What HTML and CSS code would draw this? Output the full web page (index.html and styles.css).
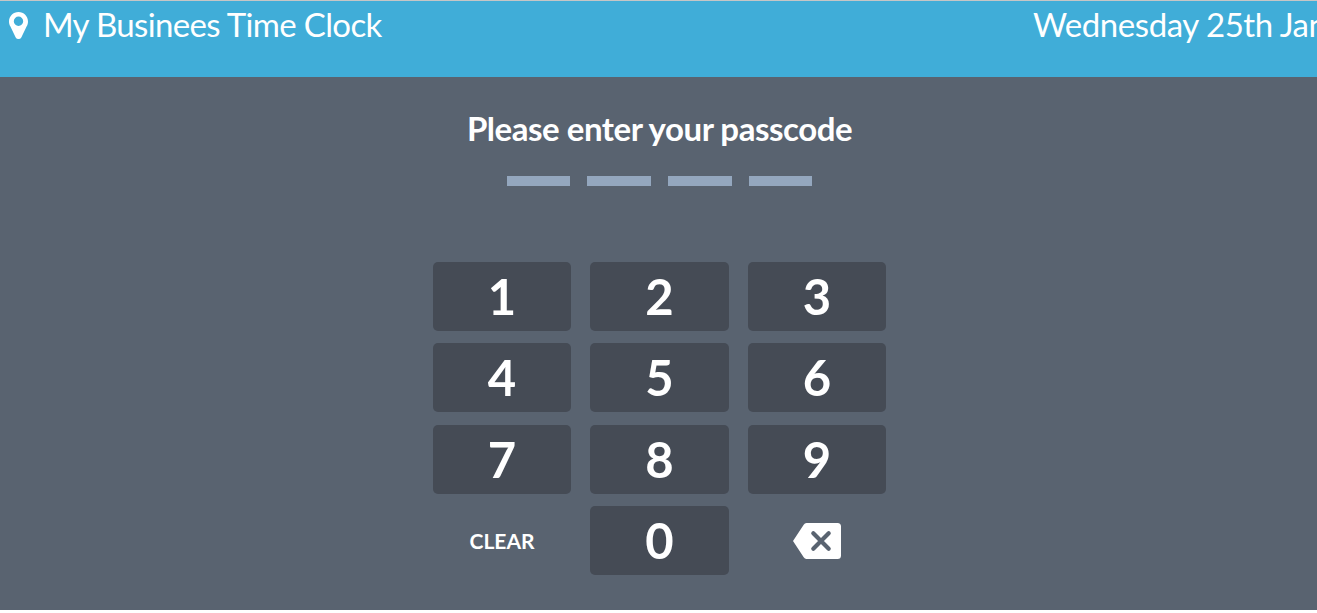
FILE: index.html
```html
<!DOCTYPE html>
<html lang="en">
<head>
<meta charset="utf-8">
<title>My Businees Time Clock</title>
<link rel="stylesheet" href="styles.css">
</head>
<body>
<header class="topbar">
  <svg class="pin" viewBox="0 0 19 27" aria-hidden="true"><path fill="#fff" fill-rule="evenodd" d="M9.500 0C4.200 0 0 4.200 0 9.400C0 11.500 .6 13 1.300 14.300L6.700 25.400Q7.500 27 9.500 27T12.300 25.400L17.700 14.300C18.400 13 19 11.500 19 9.400C19 4.200 14.800 0 9.500 0ZM9.500 4.500A4.700 4.700 0 1 1 9.500 13.900A4.700 4.700 0 1 1 9.500 4.500Z"/></svg>
  <span class="business">My Businees Time Clock</span>
  <span class="date">Wednesday 25th Jan</span>
</header>
<main class="clock">
  <h1 class="prompt">Please enter your passcode</h1>
  <div class="slots"><i class="slot"></i><i class="slot"></i><i class="slot"></i><i class="slot"></i></div>
  <div class="keypad">
    <button class="key">1</button><button class="key">2</button><button class="key">3</button>
    <button class="key">4</button><button class="key">5</button><button class="key">6</button>
    <button class="key">7</button><button class="key">8</button><button class="key">9</button>
    <button class="key clear">CLEAR</button><button class="key">0</button>
    <button class="key erase" aria-label="Delete"><svg class="erase-icon" viewBox="0 0 48 36"><path fill="#fff" d="M13.500 0H44.500Q48 0 48 3.500V32.500Q48 36 44.500 36H13.500Q11.700 36 10.700 34.300L0 18L10.700 1.700Q11.700 0 13.500 0Z"/><path stroke="#596370" stroke-width="4.200" stroke-linecap="round" d="M20.300 10.300L35.700 25.700M35.700 10.300L20.300 25.700"/></svg></button>
  </div>
</main>
</body>
</html>
```
FILE: styles.css
```css
* { box-sizing: border-box; }
body {
  margin: 0;
  height: 613px;
  overflow: hidden;
  display: flex;
  flex-direction: column;
  background: #fff;
  color: #fff;
  font-family: Lato, sans-serif;
}
.topbar {
  height: 77px;
  flex: none;
  display: flex;
  align-items: flex-start;
  padding: 3px 0 0 9px;
  border-top: 1px solid #c6c6c6;
  background: #40add8;
  font-size: 33px;
  line-height: 40px;
  white-space: nowrap;
}
.pin { width: 19px; height: 27px; margin: 8px 15px 0 0; flex: none; }
.business { width: 990px; flex: none; letter-spacing: -0.650px; }
.date { flex: 1; min-width: 0; overflow: hidden; letter-spacing: -0.450px; }
.clock {
  height: 533px;
  flex: none;
  display: flex;
  flex-direction: column;
  align-items: center;
  background: #596370;
  padding: 31px 0 0 2px;
}
.prompt { margin: 0; font-size: 33px; line-height: 40px; font-weight: 700; letter-spacing: -0.460px; }
.slots { display: flex; gap: 17px; margin-top: 28px; }
.slot { width: 63.6px; height: 10px; background: #94a7be; }
.keypad {
  display: grid;
  grid-template-columns: repeat(3, 138.500px);
  grid-auto-rows: 69px;
  gap: 12.400px 19px;
  margin-top: 76px;
}
.key {
  border: 0;
  padding: 0;
  border-radius: 5px;
  background: #454b55;
  color: #fff;
  font: 700 49px/69px Lato, sans-serif;
}
.clear { background: none; font-size: 21px; }
.erase { background: none; }
.erase-icon { width: 48px; height: 36px; display: block; margin: auto; }
```
